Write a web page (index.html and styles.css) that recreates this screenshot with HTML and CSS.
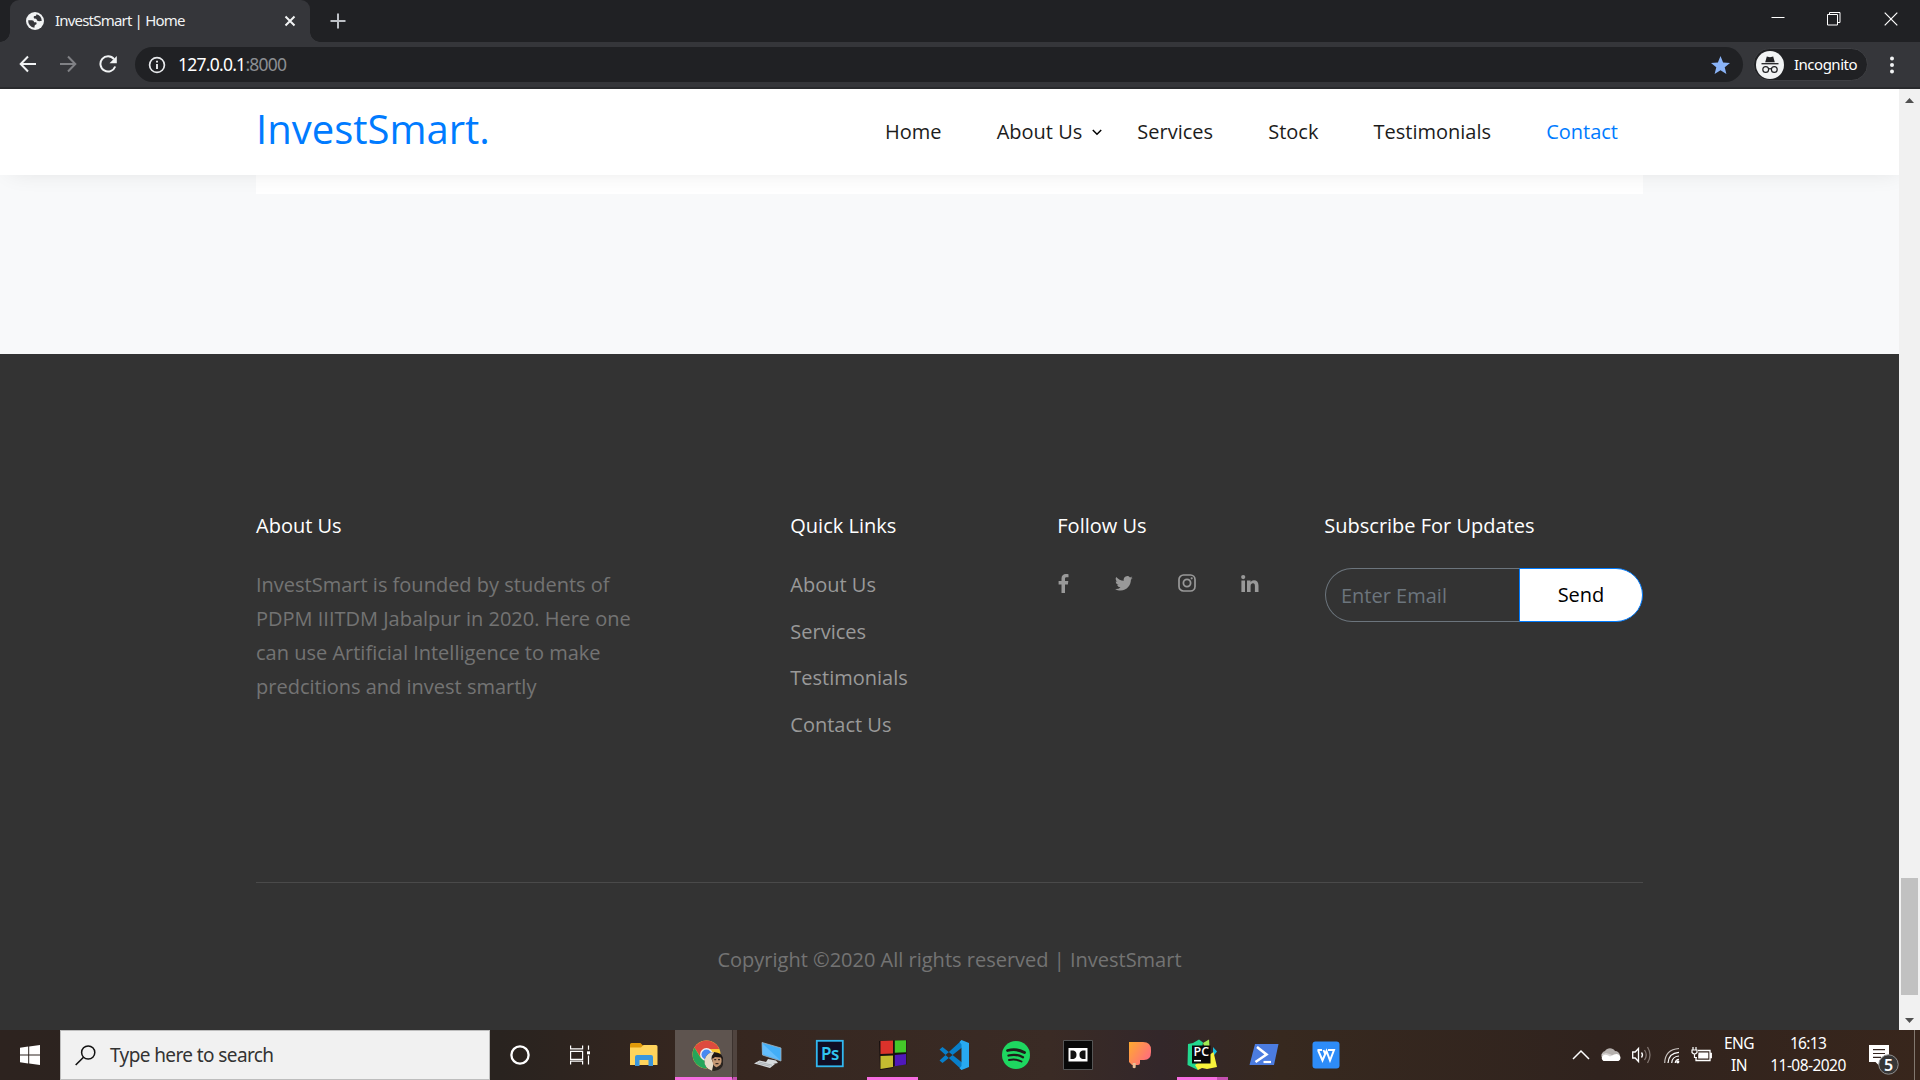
FILE: index.html
```html
<!DOCTYPE html>
<html lang="en">
<head>
<meta charset="utf-8">
<title>InvestSmart | Home</title>
<link rel="stylesheet" href="styles.css">
</head>
<body>
<div class="desktop">
  <div class="tabstrip">
    <div class="tab">
      <svg class="globe" width="18" height="18" viewBox="0 0 18 18"><circle cx="9" cy="9" r="9" fill="#f1f3f4"/><path d="M2.200 8.200h3.600c1.600 0 2.200.9 2.200 2h1.600c.7 0 1 .5 1 1.200 0 1-.8 1.100-1.400 1.400-.6.400-.6 1.600-.8 3A7 7 0 0 1 2.200 8.200zM10.500 2.200c-.2 1.600-.8 1.800-1.900 1.900-.9.100-.9.800-.8 1.700.1.800 1 .9 2 .9.900 0 .9 1.500 1.600 2.100.9.700 2.500.4 4.300.3A7 7 0 0 0 10.500 2.200z" fill="#35363a"/></svg>
      <span class="tab-title">InvestSmart | Home</span>
      <svg class="tab-close" width="12" height="12" viewBox="0 0 12 12"><path d="M1.500 1.500l9 9M10.500 1.500l-9 9" stroke="#f1f3f4" stroke-width="2"/></svg>
    </div>
    <svg class="newtab" width="16" height="16" viewBox="0 0 16 16"><path d="M8 .5v15M.5 8h15" stroke="#bdc1c6" stroke-width="2"/></svg>
    <div class="window-buttons">
      <svg width="14" height="14" viewBox="0 0 14 14"><path d="M.5 5.500h13" stroke="#fff"/></svg>
      <svg width="14" height="14" viewBox="0 0 14 14"><path d="M.5 2.500h10v10.500h-10zM2.500 2.500V.5h10.500v10h-2.500" fill="none" stroke="#fff"/></svg>
      <svg width="14" height="14" viewBox="0 0 14 14"><path d="M.7.7l12.600 12.600M13.300.7L.7 13.300" stroke="#fff" stroke-width="1.200"/></svg>
    </div>
  </div>
  <div class="toolbar">
    <div class="nav-buttons">
      <svg width="18" height="18" viewBox="0 0 18 18"><path d="M17 9H2M9 1.500L1.700 9 9 16.500" fill="none" stroke="#f1f3f4" stroke-width="2"/></svg>
      <svg width="18" height="18" viewBox="0 0 18 18"><path d="M1 9h15M9 1.500L16.300 9 9 16.500" fill="none" stroke="#808185" stroke-width="2"/></svg>
      <svg width="18" height="18" viewBox="0 0 18 18"><path d="M15 4.200A7.600 7.600 0 1 0 16.200 11.500" fill="none" stroke="#f1f3f4" stroke-width="2"/><path d="M17.800 1v7.300h-7.300z" fill="#f1f3f4"/></svg>
    </div>
    <div class="omnibox">
      <svg width="18" height="18" viewBox="0 0 18 18"><circle cx="9" cy="9" r="7.400" fill="none" stroke="#e8eaed" stroke-width="1.700"/><path d="M9 8v5M9 4.700v1.800" stroke="#e8eaed" stroke-width="1.900"/></svg>
      <span class="url">127.0.0.1<span class="port">:8000</span></span>
      <svg class="star" width="19" height="18" viewBox="0 0 19 18"><path d="M9.500 0l2.600 6.400 6.900.5-5.300 4.400 1.700 6.700-5.900-3.700L3.600 18l1.700-6.700L0 6.900l6.900-.5z" fill="#8ab4f8"/></svg>
    </div>
    <div class="incognito">
      <svg width="28" height="28" viewBox="0 0 28 28"><circle cx="14" cy="14" r="14" fill="#f1f3f4"/><path d="M9.200 11.200l1.600-5.700 3.200.8 3.200-.8 1.600 5.700z" fill="#202124"/><path d="M5.500 12.700h17" stroke="#202124" stroke-width="1.300"/><g fill="none" stroke="#202124" stroke-width="1.200"><circle cx="9.700" cy="18.500" r="2.900"/><circle cx="18.300" cy="18.500" r="2.900"/><path d="M12.600 18q1.400-.8 2.800 0"/></g></svg>
      <span class="incognito-label">Incognito</span>
    </div>
    <svg class="kebab" width="4" height="18" viewBox="0 0 4 18"><g fill="#f1f3f4"><circle cx="2" cy="2.500" r="2"/><circle cx="2" cy="9" r="2"/><circle cx="2" cy="15.500" r="2"/></g></svg>
  </div>
  <div class="viewport">
    <div class="page">
      <header class="site-header">
        <div class="container header-row">
          <a class="logo">InvestSmart.</a>
          <nav class="menu">
            <a>Home</a>
            <a class="has-children">About Us<svg class="caret" width="10" height="7" viewBox="0 0 10 7"><path d="M.8 1L5 5.300 9.200 1" fill="none" stroke="#000" stroke-width="1.500"/></svg></a>
            <a>Services</a>
            <a>Stock</a>
            <a>Testimonials</a>
            <a class="active">Contact</a>
          </nav>
        </div>
      </header>
      <section class="contact-end"><div class="container"><div class="form-card"></div></div></section>
      <footer class="site-footer">
        <div class="container">
          <div class="footer-grid">
            <div class="about">
              <h2>About Us</h2>
              <p>InvestSmart is founded by students of<br>PDPM IIITDM Jabalpur in 2020. Here one<br>can use Artificial Intelligence to make<br>predcitions and invest smartly</p>
            </div>
            <div>
              <h2>Quick Links</h2>
              <ul class="links"><li>About Us</li><li>Services</li><li>Testimonials</li><li>Contact Us</li></ul>
            </div>
            <div>
              <h2>Follow Us</h2>
              <div class="social">
                <svg width="11" height="19" viewBox="0 0 11 19"><path d="M10.500.2v3H8.700C7.300 3.200 7 3.900 7 4.900V7h3.300l-.4 3.400H7V19H3.500v-8.600H.6V7h2.900V4.500C3.500 1.600 5.300 0 7.900 0c1.200 0 2.300.1 2.600.2z"/></svg>
                <svg width="18" height="15" viewBox="0 0 18 15"><path d="M17.700 1.800a7.600 7.600 0 0 1-1.800 1.900c.2 5-3.600 10.900-10.300 10.900-2 0-3.900-.6-5.400-1.600a7.400 7.400 0 0 0 5.300-1.500 3.700 3.700 0 0 1-3.400-2.500c.6.100 1.100.1 1.600-.1A3.600 3.600 0 0 1 .8 5.300c.5.300 1 .4 1.600.5A3.700 3.700 0 0 1 1.300.9a10.400 10.400 0 0 0 7.500 3.800A3.600 3.600 0 0 1 15 1.400c.8-.2 1.600-.5 2.300-.9-.3.800-.9 1.500-1.600 2 .7-.1 1.400-.3 2-.7z"/></svg>
                <svg width="18" height="18" viewBox="0 0 18 18"><rect x="1" y="1" width="16" height="16" rx="4.500" fill="none" stroke="#999" stroke-width="1.700"/><circle cx="9" cy="9" r="3.600" fill="none" stroke="#999" stroke-width="1.800"/><circle cx="13.700" cy="4.300" r="1.100"/></svg>
                <svg width="18" height="17" viewBox="0 0 18 17"><path d="M.4 5.600H4V17H.4zM6 5.600h3.600v1.600C10.200 6.200 11.200 5.300 13 5.300c2.700 0 4.500 1.800 4.500 5.200V17h-3.600v-6.100c0-1.600-.5-2.600-1.900-2.600s-2.400 1-2.400 2.600V17H6z"/><circle cx="2.200" cy="2.100" r="2.100"/></svg>
              </div>
            </div>
            <div>
              <h2>Subscribe For Updates</h2>
              <div class="subscribe"><div class="email">Enter Email</div><div class="send">Send</div></div>
            </div>
          </div>
          <div class="copyright">Copyright ©2020 All rights reserved | InvestSmart</div>
        </div>
      </footer>
    </div>
    <div class="scrollbar">
      <svg width="9" height="5" viewBox="0 0 9 5"><path d="M0 5L4.500 0 9 5z" fill="#505050"/></svg>
      <div class="thumb"></div>
      <svg width="9" height="5" viewBox="0 0 9 5"><path d="M0 0l4.500 5L9 0z" fill="#505050"/></svg>
    </div>
  </div>
  <div class="taskbar">
    <div class="start"><svg width="20" height="20" viewBox="0 0 20 20"><path d="M0 2.700L8.200 1.500v8H0zM9.200 1.400L20 0v9.500H9.200zM0 10.500h8.200v8L0 17.300zM9.200 10.500H20V20L9.200 18.600z" fill="#fff"/></svg></div>
    <div class="search"><svg width="21" height="21" viewBox="0 0 21 21"><circle cx="13.200" cy="7.500" r="6.600" fill="none" stroke="#111" stroke-width="1.500"/><path d="M8.500 12.200L.7 20" stroke="#111" stroke-width="1.600"/></svg><span>Type here to search</span></div>
    <div class="sys"><svg width="20" height="20" viewBox="0 0 20 20"><circle cx="10" cy="10" r="8.600" fill="none" stroke="#fff" stroke-width="2.300"/></svg></div>
    <div class="sys"><svg width="20" height="20" viewBox="0 0 20 20"><path d="M.6.500v3.300h12V.500M.6 19.500v-3.300h12v3.300M.6 6.300h12v8H.6zM18.500.500v4.300M18.500 10.500v9" fill="none" stroke="#fff" stroke-width="1.200"/><path d="M17 6.300h3v3h-3z" fill="#fff"/></svg></div>
    <div class="apps">
      <div class="app"><svg width="32" height="32" viewBox="0 0 32 32"><path d="M2 27V5.500Q2 4 3.500 4h9l2.500 2.500V9H2z" fill="#e09a0a"/><path d="M2 8.500h11l2.500-2.500H28q1.500 0 1.500 1.500V26H2z" fill="#ffd45c"/><path d="M7 27V18q0-2 2-2h14q2 0 2 2v9h-4.500v-6h-9v6z" fill="#3a96dd"/></svg></div>
      <div class="app active-app"><svg width="32" height="32" viewBox="0 0 32 32"><circle cx="15.500" cy="15.500" r="14" fill="#fbc936"/><path d="M3.400 8.500A14 14 0 0 1 27.600 8.500L28 10H15.500L9.500 18z" fill="#dd4b3e"/><path d="M3.400 8.500A14 14 0 0 0 15.500 29.500L20 20 9.500 18.500z" fill="#25a55a"/><circle cx="15.500" cy="15.500" r="6.500" fill="#f2f2f2"/><circle cx="15.500" cy="15.500" r="5" fill="#4688f1"/><circle cx="23" cy="22.500" r="9.500" fill="#2a2420"/><path d="M23 13a9.500 9.500 0 0 0-2 18.800l1.500-7L20.500 20z" fill="#e6dac6"/><path d="M21 19q1-3 5-3t4.500 4-1 5.500-3.500 2.500-4-3z" fill="#c69873"/><path d="M20.500 19.500q0-5.500 5.500-5.500t6 7l-2-2.500-6-.5-2 1.500z" fill="#1d1715"/><path d="M23.200 20.700h2M27 20.700h2M24.500 24.700h3" stroke="#3a2a22" stroke-width="1.200"/></svg><i></i></div>
      <div class="app"><svg width="32" height="32" viewBox="0 0 32 32"><path d="M10 3.500l19 5.500v13L10.500 16z" fill="#43aef7" stroke="#a4b2bd" stroke-width=".8"/><path d="M10.500 15V4.500L28 21z" fill="#64bdfb"/><path d="M16 20l8 1.500 2 2.500-5 1-7-2zM7.500 21.500L23 25l-5 4L2 24.500z" fill="#d7dbde"/><path d="M7 23l13 3.200M5 24l13 3.200" stroke="#99a0a5" stroke-width=".7"/></svg></div>
      <div class="app"><svg width="32" height="32" viewBox="0 0 32 32"><rect x="2.800" y="1.800" width="26" height="25.500" fill="#100e25" stroke="#31b8f0" stroke-width="1.800"/><text x="16" y="20.500" class="ps">Ps</text></svg></div>
      <div class="app running"><svg width="32" height="32" viewBox="0 0 32 32"><path d="M3 2l27.500-1v24.500L17.500 27 17 29 4 31z" fill="#17100f"/><path d="M4.500 2l12.500-.5v13L4.500 15z" fill="#db322b"/><path d="M18.800 1.500L30 1.300v11.900l-11.200.6z" fill="#44c729"/><path d="M4.500 17L17 16.500V28l-12.500 2z" fill="#c4bb30"/><path d="M18.800 16l11.200-1v10.500l-11.200 1.800z" fill="#5018ba"/></svg></div>
      <div class="app"><svg width="32" height="32" viewBox="0 0 32 32"><path d="M1.500 10.500l3-2.500L24 23.500V31zM1.500 21.500l3 2.500L24 8.500V1z" fill="#087fca"/><path d="M23.500 1L31 4v24l-7.500 3-2-1.800L23.500 27V5.500l-2-2.500z" fill="#28a9f1"/></svg></div>
      <div class="app"><svg width="32" height="32" viewBox="0 0 32 32"><circle cx="16" cy="16" r="14" fill="#1ed760"/><g fill="none" stroke="#201b19" stroke-linecap="round"><path d="M7.500 11.500q9-2.500 17 2" stroke-width="2.800"/><path d="M8.500 16.500q8-2 14.500 1.700" stroke-width="2.300"/><path d="M9 21q7-1.500 12.500 1.500" stroke-width="1.900"/></g></svg></div>
      <div class="app"><svg width="32" height="32" viewBox="0 0 32 32"><path d="M1.500 1.500h29v29h-29z" fill="#080808" stroke="#555"/><path d="M6.500 9h19v13.500h-19z" fill="#fff"/><path d="M8.500 11.500h1.500c3.500 0 4.500 1.800 4.500 4.200S13.500 20 10 20H8.500zM23.500 11.500H22c-3.500 0-4.500 1.800-4.500 4.200s1 4.300 4.500 4.300h1.500z" fill="#111"/></svg></div>
      <div class="app"><svg width="32" height="32" viewBox="0 0 32 32"><defs><linearGradient id="p" x2="1" y2=".7"><stop stop-color="#ffab2e"/><stop offset="1" stop-color="#ff6b80"/></linearGradient></defs><path d="M5 3h14q8 0 8 8v2q0 8-7 8h-4v3q0 2-2 2H8l-3-3z" fill="url(#p)"/><path d="M8.700 24h3v4.500q-1.500 1.500-3 0z" fill="#eabf95"/></svg></div>
      <div class="app running pycharm"><svg width="32" height="32" viewBox="0 0 32 32"><path d="M2 5l5-1 6-3.500 4 3L12 31 1.500 26z" fill="#22d88f"/><path d="M17 4l6-3.500.5 8L20 12z" fill="#a0ec52"/><path d="M27 8l4 4.500-4 5z" fill="#16bfe0"/><path d="M9 26l18.500-13 3.500 15-10 2-5-1-4 2z" fill="#f8f33b"/><path d="M6 6.500h18.500v18H6z" fill="#090909"/><text x="15.300" y="17.200" class="pc">PC</text><path d="M8 21.700h7" stroke="#fff" stroke-width="1.500"/></svg><i></i></div>
      <div class="app"><svg width="32" height="32" viewBox="0 0 32 32"><path d="M7 5h23.500L26 26H1.500z" fill="#4b7ce0"/><path d="M9 8l9.500 7.500L7.500 23" fill="none" stroke="#fff" stroke-width="2.600"/><path d="M15.500 23H23" stroke="#fff" stroke-width="2.200"/></svg></div>
      <div class="app"><svg width="32" height="32" viewBox="0 0 32 32"><rect x="2.500" y="2.500" width="27" height="27" rx="3" fill="#2d8cf8"/><path d="M7.500 11h4.500M8 11l4.500 10.500L16.500 12l3.500 9.500L24 11h-6M13.500 11l2 5" fill="none" stroke="#fff" stroke-width="2"/></svg></div>
    </div>
    <div class="tray">
      <svg width="18" height="20" viewBox="0 0 18 20"><path d="M1 14l8-8 8 8" fill="none" stroke="#fff" stroke-width="1.500"/></svg>
      <svg width="21" height="20" viewBox="0 0 21 20"><path d="M1.500 12a5 5 0 0 1 3.500-6A6 6 0 0 1 15 6a5 5 0 0 1 5 5z" fill="#b5b0ad"/><path d="M1.500 9.500L6 8l5 1.500 2 2-6 3z" fill="#d5d2d0"/><path d="M3.500 16a3.300 3.300 0 0 1-1-5q3-2.500 7.500.5l4-2q4-1.500 6 1.500 1.500 3.500-1.500 5z" fill="#fff"/></svg>
      <svg width="22" height="20" viewBox="0 0 22 20"><path d="M1.700 7h2.500l3.300-3.500v13L4.200 13H1.700z" fill="none" stroke="#fff" stroke-width="1.300"/><path d="M10.500 7.500q2 2.500 0 5" fill="none" stroke="#fff" stroke-width="1.300"/><path d="M13.500 5q3.500 5 0 10M16.500 2q5 8 0 16" fill="none" stroke="#807570" stroke-width="1.300"/></svg>
      <svg width="18" height="20" viewBox="0 0 18 20"><g fill="none" stroke="#fff" stroke-width="1.200"><path d="M1.700 18Q2 4.500 16 3.500" stroke="#c9c3c0"/><path d="M5 18Q5.500 8 16 7.300M8.700 18q.3-6.500 7.300-7M12.200 18q.3-3.500 3.800-3.700"/></g><circle cx="14.800" cy="16.800" r="1.600" fill="#fff"/></svg>
      <svg width="21" height="20" viewBox="0 0 21 20"><path d="M7 5.500h12v10H5V12M19 8.500h1.300v4H19" fill="none" stroke="#fff" stroke-width="1.300"/><path d="M7.500 7.500h9.800v6H7.200v-3z" fill="#fff"/><path d="M2 2v2.500M5 2v2.500M1 5h5v2.500q-2.500 3-5 0zM3.500 9v3.500H6" fill="none" stroke="#fff" stroke-width="1.200"/></svg>
    </div>
    <div class="lang"><span>ENG</span><span>IN</span></div>
    <div class="clock"><span>16:13</span><span class="date">11-08-2020</span></div>
    <div class="notify"><svg width="31" height="31" viewBox="0 0 31 31"><path d="M0 0h20v17H11v4.500L6.500 17H0z" fill="#fff"/><path d="M4 4.700h12M4 8.500h12M4 12.300h8" stroke="#33241f" stroke-width="1.200"/><circle cx="19.500" cy="19.500" r="9.700" fill="#373737" stroke="#8f8f8f"/><text x="19.500" y="25.500" class="count">5</text></svg></div>
    <div class="peek"></div>
  </div>
</div>
</body>
</html>
```
FILE: styles.css
```css
* { box-sizing: border-box; }
body { margin: 0; font-family: "Open Sans", "Noto Sans", sans-serif; }
svg { display: block; flex: none; }
h2, p, ul { margin: 0; padding: 0; font-weight: 400; list-style: none; }
.desktop { width: 1920px; height: 1080px; display: flex; flex-direction: column; overflow: hidden; }

/* browser frame */
.tabstrip { height: 42px; background: #202124; display: flex; align-items: flex-start; color: #f1f3f4; font-family: "Noto Sans", sans-serif; }
.tab { position: relative; width: 300px; height: 42px; margin-left: 10px; padding: 0 14px 0 16px; background: #35363a; border-radius: 9px 9px 0 0; display: flex; align-items: center; }
.tab::before, .tab::after { content: ""; position: absolute; bottom: 0; width: 10px; height: 10px; }
.tab::before { left: -10px; background: radial-gradient(circle at 0 0, #202124 9.500px, #35363a 10px); }
.tab::after { right: -10px; background: radial-gradient(circle at 100% 0, #202124 9.500px, #35363a 10px); }
.tab-title { margin-left: 11px; flex: 1; font-size: 15px; letter-spacing: -0.800px; white-space: nowrap; padding-bottom: 2px; }
.newtab { margin: 13px 0 0 20px; }
.window-buttons { margin: 12px 22px 0 auto; display: flex; gap: 43px; }
.window-buttons svg:first-child { margin-right: -1px; }
.toolbar { height: 47px; background: #35363a; border-bottom: 2px solid #292a2d; display: flex; align-items: center; padding-left: 19px; font-family: "Noto Sans", sans-serif; }
.nav-buttons { display: flex; gap: 22px; padding-bottom: 1px; }
.omnibox { width: 1608px; height: 35px; margin-left: 18px; padding: 0 13px 0 13px; border-radius: 18px; background: #202124; display: flex; align-items: center; }
.url { margin-left: 12px; color: #fff; font-size: 17.500px; letter-spacing: -0.750px; padding-bottom: 1px; }
.port { color: #8b8e92; }
.star { margin-left: auto; }
.incognito { width: 115px; height: 33px; margin-left: 10px; padding-left: 2px; border: 1px solid #3e3f43; border-radius: 17px; background: #202124; display: flex; align-items: center; color: #fff; font-size: 15px; }
.incognito-label { margin-left: 10px; letter-spacing: -0.500px; padding-bottom: 1px; }
.kebab { margin-left: 22px; }

/* page */
.viewport { height: 941px; display: flex; }
.page { width: 1899px; display: flex; flex-direction: column; font-size: 20px; line-height: 34px; }
.container { width: 1387px; margin: 0 auto; }
.site-header { position: relative; height: 86px; background: #fff; box-shadow: 5px 0 25px -5px rgba(0, 0, 0, .12); clip-path: inset(0 0 -40px 0); z-index: 1; }
.header-row { height: 86px; display: flex; align-items: center; justify-content: space-between; }
.logo { color: #007bff; font-size: 40px; font-weight: 400; margin-bottom: 6px; }
.menu { display: flex; gap: 55.100px; padding-right: 25px; color: #1c1c1c; }
.menu .active { color: #007bff; }
.has-children { position: relative; }
.caret { position: absolute; right: -20px; top: 14px; }
.contact-end { height: 179px; background: #f8f9fa; }
.form-card { height: 19px; background: #fff; }
.site-footer { flex: 1; background: #333; color: #737373; padding-top: 155px; }
.footer-grid { height: 374px; display: grid; grid-template-columns: 534.300px 267px 267px 318px; border-bottom: 1px solid #4a4a4a; }
.site-footer h2 { color: #fff; font-size: 20px; line-height: 34px; margin-bottom: 25px; }
.links { color: #999; display: flex; flex-direction: column; gap: 12.500px; }
.social { display: flex; align-items: center; height: 30px; fill: #999; gap: 45px; padding-left: .5px; }
.social svg:first-child { margin-right: 1px; }
.subscribe { display: flex; height: 54px; width: 318px; margin-left: .700px; }
.email { width: 194px; border: 1px solid #6c757d; border-right: 0; border-radius: 27px 0 0 27px; color: #6c757d; padding-left: 15px; line-height: 54px; }
.send { flex: 1; border: 1px solid #007bff; border-radius: 0 27px 27px 0; background: #fff; color: #000; text-align: center; line-height: 52px; }
.copyright { text-align: center; padding-top: 60px; }
.scrollbar { width: 21px; background: #f1f1f1; display: flex; flex-direction: column; align-items: center; padding: 9px 0 7px; }
.thumb { width: 17px; height: 117px; background: #c1c1c1; margin: auto 0 23px; }

/* taskbar */
.taskbar { position: relative; height: 50px; display: flex; background: linear-gradient(90deg, #2d231f 0, #29231f 500px, #35261f 680px, #3a2b25 1050px, #33272a 1160px, #37291f 1280px, #30231e 1600px, #38261c 1920px); color: #fff; font-family: "Noto Sans", sans-serif; }
.start { width: 60px; display: flex; align-items: center; justify-content: center; }
.search { width: 430px; background: #f1f1f1; border: 1px solid #bdbdbd; display: flex; align-items: center; padding-left: 14px; color: #333; font-size: 19px; }
.search span { margin-left: 14px; letter-spacing: -0.600px; }
.sys { width: 60px; display: flex; align-items: center; justify-content: center; }
.sys + .sys { width: 63.500px; padding-right: 4px; }
.apps { display: flex; }
.app { position: relative; width: 61.950px; display: flex; align-items: center; justify-content: center; }
.active-app { background: #5e544f; border-bottom: 3px solid #f66de0; padding: 3px 0 0 1px; }
.active-app i { position: absolute; right: 0; top: 0; width: 5px; height: 50px; background: #50443f; border-left: 1px solid #3c322e; border-bottom: 3px solid #c350b0; }
.running::after { content: ""; position: absolute; bottom: 0; left: 6px; width: 51px; height: 3px; background: #f66de0; }
.pycharm i { position: absolute; bottom: 0; left: 46px; width: 11px; height: 3px; background: #c350b0; z-index: 1; }
.ps { font: 600 17px "Noto Sans", sans-serif; letter-spacing: -0.500px; fill: #31c5f0; text-anchor: middle; }
.pc { font: 600 12.500px "Open Sans", sans-serif; fill: #fff; text-anchor: middle; }
.tray { margin-left: auto; display: flex; align-items: center; gap: 10px; }
.lang, .clock { display: flex; flex-direction: column; align-items: center; font-size: 15.500px; line-height: 22px; padding-top: 2px; }
.lang { width: 54px; letter-spacing: -0.600px; }
.clock { width: 84px; letter-spacing: -0.700px; }
.date { letter-spacing: -0.550px; }
.notify { width: 64px; padding: 15px 0 0 19px; }
.count { font: 600 16px "Noto Sans", sans-serif; fill: #fff; text-anchor: middle; }
.peek { width: 6px; border-left: 1px solid #82786f; }
```
